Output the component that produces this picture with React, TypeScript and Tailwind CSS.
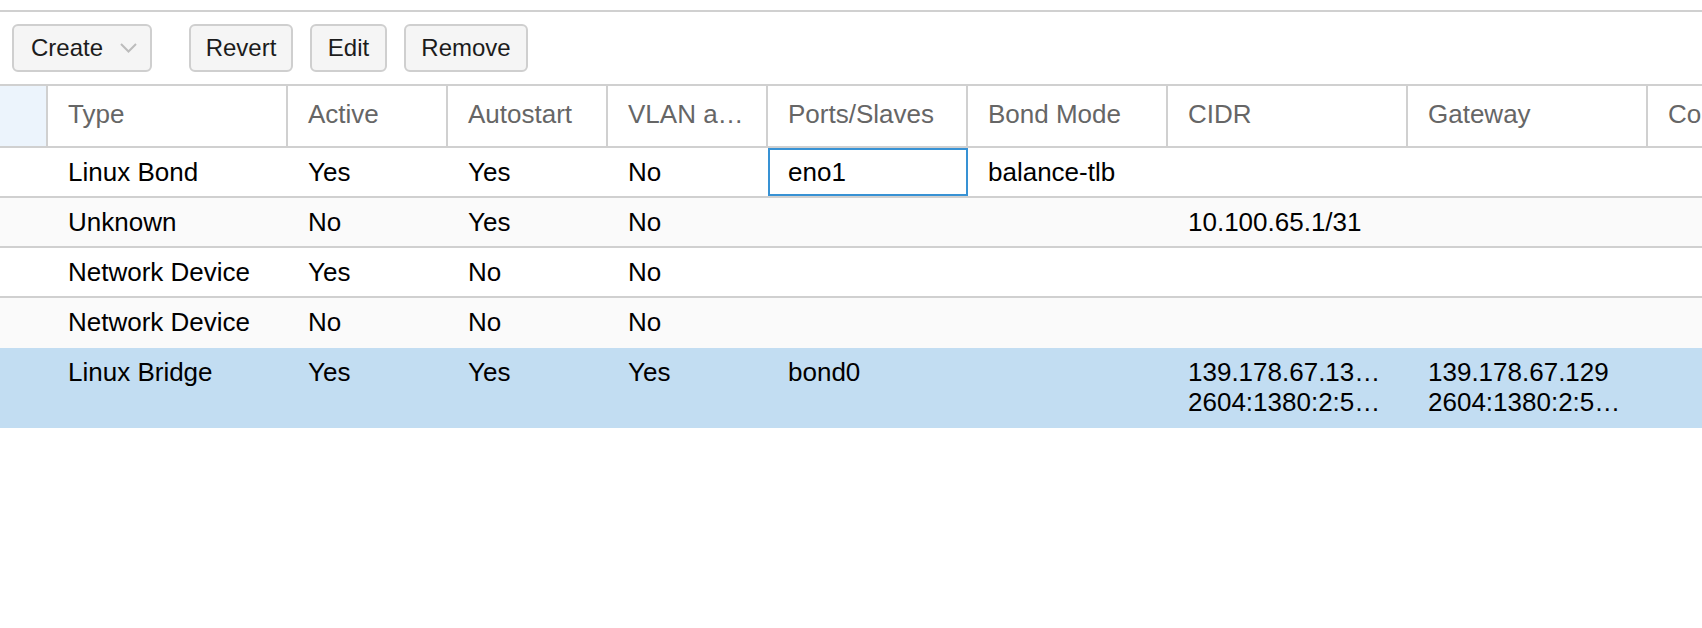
import React from 'react';

const cols = 'grid grid-cols-[48px_240px_160px_160px_160px_200px_200px_240px_240px_240px]';

const headers = ['Type', 'Active', 'Autostart', 'VLAN a…', 'Ports/Slaves', 'Bond Mode', 'CIDR', 'Gateway', 'Comment'];

type Row = {
  cells: string[][];
  bg: string;
  focus?: number;
};

const rows: Row[] = [
  { cells: [['Linux Bond'], ['Yes'], ['Yes'], ['No'], ['eno1'], ['balance-tlb'], [], [], []], bg: 'bg-white border-[#d0d0d0]', focus: 4 },
  { cells: [['Unknown'], ['No'], ['Yes'], ['No'], [], [], ['10.100.65.1/31'], [], []], bg: 'bg-[#fafafa] border-[#d0d0d0]' },
  { cells: [['Network Device'], ['Yes'], ['No'], ['No'], [], [], [], [], []], bg: 'bg-white border-[#d0d0d0]' },
  { cells: [['Network Device'], ['No'], ['No'], ['No'], [], [], [], [], []], bg: 'bg-[#fafafa] border-[#fafafa]' },
  {
    cells: [
      ['Linux Bridge'],
      ['Yes'],
      ['Yes'],
      ['Yes'],
      ['bond0'],
      [],
      ['139.178.67.13…', '2604:1380:2:5…'],
      ['139.178.67.129', '2604:1380:2:5…'],
      [],
    ],
    bg: 'bg-[#c2ddf2] border-[#c2ddf2]',
  },
];

const Button = ({ children, className = '' }: { children: React.ReactNode; className?: string }) => (
  <button className={`h-[48px] flex items-center border-2 border-[#cfcfcf] rounded-[6px] bg-[#f5f5f5] text-[24px] leading-none text-[#1c1c1c] ${className}`}>
    {children}
  </button>
);

export default function App() {
  return (
    <div className="w-full min-h-screen overflow-hidden bg-white font-['Liberation_Sans',Arial,sans-serif]">
      <div className="h-[10px]" />

      {/* toolbar */}
      <div className="border-t-2 border-[#d0d0d0] flex items-center gap-[17px] px-[12px] py-[12px]">
        <Button className="w-[140px] pl-[17px] pr-[13px] justify-between">
          <span>Create</span>
          <svg width="17" height="10" viewBox="0 0 17 10" fill="none">
            <polyline points="1,1 8.5,8.5 16,1" stroke="#bcbcbc" strokeWidth="2" />
          </svg>
        </Button>
        <Button className="ml-[20px] w-[104px] justify-center">Revert</Button>
        <Button className="w-[77px] justify-center">Edit</Button>
        <Button className="w-[124px] justify-center">Remove</Button>
      </div>

      {/* header */}
      <div className={`${cols} w-max border-y-2 border-[#d0d0d0] text-[26px] text-[#666]`}>
        <div className="h-[60px] bg-[#ecf4fc] border-r-2 border-[#d0d0d0]" />
        {headers.map((h) => (
          <div key={h} className="h-[60px] flex items-center px-[20px] pb-[3px] border-r-2 border-[#d0d0d0] whitespace-nowrap overflow-hidden">
            {h}
          </div>
        ))}
      </div>

      {/* rows */}
      {rows.map((r, i) => (
        <div key={i} className={`${cols} w-max border-b-2 ${r.bg} text-[26px] text-black`}>
          <div />
          {r.cells.map((lines, j) => (
            <div
              key={j}
              className={
                r.focus === j
                  ? 'border-2 border-[#3892d4] px-[18px] py-[7px] leading-[30px] overflow-hidden'
                  : 'px-[20px] py-[9px] leading-[30px] overflow-hidden'
              }
            >
              {lines.map((l, k) => (
                <div key={k} className="truncate">
                  {l}
                </div>
              ))}
            </div>
          ))}
        </div>
      ))}
    </div>
  );
}
